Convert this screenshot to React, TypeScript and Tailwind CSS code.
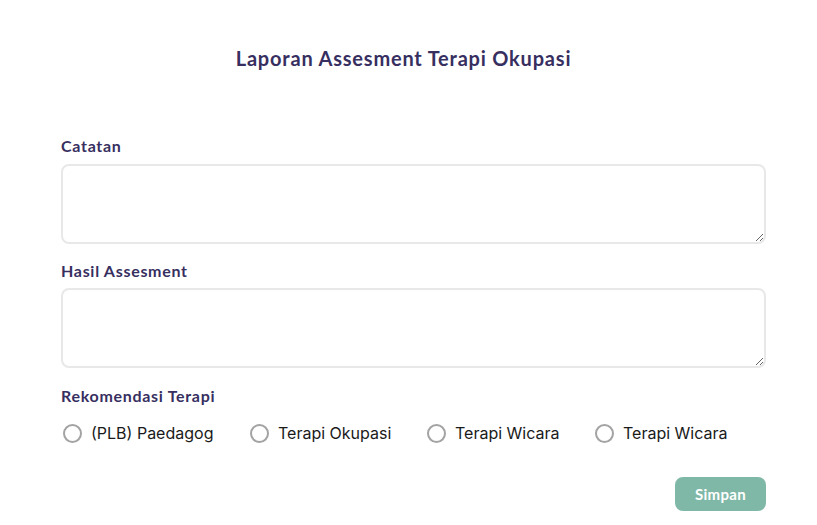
import React from "react";

const labelCls = "text-[16px] font-bold text-[#372f5f] leading-5 tracking-[0.7px]";

function Radio({ label }: { label: string }) {
  return (
    <label className="flex items-center gap-[9px]">
      <span className="w-[19px] h-[19px] rounded-full border-2 border-[#a3a3a3] bg-white" />
      <span className="text-[16px] text-[#1a1a1a]" style={{ fontFamily: "Inter, sans-serif" }}>{label}</span>
    </label>
  );
}

export default function App() {
  return (
    <div className="w-[817px] h-[525px] bg-white pl-[61px] pr-[51px]" style={{ fontFamily: "Lato, sans-serif" }}>
      <h1 className="pt-[46px] text-center text-[20px] font-bold text-[#372f5f] leading-6 tracking-[0.8px]">
        <span className="inline-block -translate-x-[10px]">Laporan Assesment Terapi Okupasi</span>
      </h1>
      <div className="mt-[66px] flex flex-col">
        <div className={labelCls}>Catatan</div>
        <textarea className="mt-[8px] h-[80px] w-full rounded-lg border-2 border-[#e8e8e8] resize-y" />
        <div className={labelCls + " mt-[17px]"}>Hasil Assesment</div>
        <textarea className="mt-[7px] h-[80px] w-full rounded-lg border-2 border-[#e8e8e8] resize-y" />
        <div className={labelCls + " mt-[18px]"}>Rekomendasi Terapi</div>
        <div className="mt-[15px] flex items-center pl-[2px]">
          <div className="w-[187px]"><Radio label="(PLB) Paedagog" /></div>
          <div className="w-[177px]"><Radio label="Terapi Okupasi" /></div>
          <div className="w-[168px]"><Radio label="Terapi Wicara" /></div>
          <div><Radio label="Terapi Wicara" /></div>
        </div>
        <div className="mt-[32px] flex justify-end">
          <button className="w-[91px] h-[34px] rounded-lg bg-[#80b8a7] text-white text-[15px] font-bold tracking-[0.3px]">Simpan</button>
        </div>
      </div>
    </div>
  );
}
